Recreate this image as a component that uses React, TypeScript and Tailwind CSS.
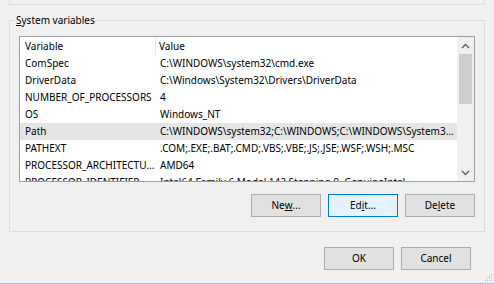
import React from 'react';

const rows: { name: string; value: string; selected?: boolean }[] = [
  { name: 'ComSpec', value: 'C:\\WINDOWS\\system32\\cmd.exe' },
  { name: 'DriverData', value: 'C:\\Windows\\System32\\Drivers\\DriverData' },
  { name: 'NUMBER_OF_PROCESSORS', value: '4' },
  { name: 'OS', value: 'Windows_NT' },
  {
    name: 'Path',
    value: 'C:\\WINDOWS\\system32;C:\\WINDOWS;C:\\WINDOWS\\System32\\Wbem;C:\\WINDOWS\\System32\\WindowsPowerShell\\v1.0\\',
    selected: true,
  },
  { name: 'PATHEXT', value: '.COM;.EXE;.BAT;.CMD;.VBS;.VBE;.JS;.JSE;.WSF;.WSH;.MSC' },
  { name: 'PROCESSOR_ARCHITECTURE', value: 'AMD64' },
  { name: 'PROCESSOR_IDENTIFIER', value: 'Intel64 Family 6 Model 142 Stepping 9, GenuineIntel' },
];

const Chevron = ({ up }: { up?: boolean }) => (
  <svg width="9" height="6" viewBox="0 0 9 6">
    <path
      d={up ? 'M1 5 L4.5 1.5 L8 5' : 'M1 1 L4.5 4.5 L8 1'}
      fill="none"
      stroke="#606060"
      strokeWidth="1.4"
    />
  </svg>
);

const Button = ({ children, focused }: { children: React.ReactNode; focused?: boolean }) => (
  <div
    className={
      focused
        ? 'w-[70px] h-[23px] flex items-center justify-center border border-[#0078d7] bg-[#e5f1fb]'
        : 'w-[70px] h-[23px] flex items-center justify-center border border-[#adadad] bg-[#e1e1e1]'
    }
  >
    {children}
  </div>
);

export default function App() {
  return (
    <div
      className="relative w-[494px] h-[284px] bg-[#f0f0f0] overflow-hidden flex flex-col text-[10px] text-black"
      style={{ fontFamily: '"Noto Sans", sans-serif' }}
    >
      {/* upper group box, mostly scrolled out */}
      <div className="mx-[9px] h-[5px] border-x border-b border-[#dcdcdc]" />

      {/* System variables group */}
      <div className="relative mt-[15px] mx-[9px] h-[212px] border border-[#dcdcdc] px-[9px] pt-[15px] flex flex-col">
        <span className="absolute left-[5px] top-[-8px] px-[1px] bg-[#f0f0f0] leading-[14px]">
          <span className="underline">S</span>ystem variables
        </span>

        <div className="h-[146px] border border-[#a0a0a0] bg-white flex overflow-hidden">
          <div className="flex-1 min-w-0 flex flex-col">
            <div className="h-[18px] flex items-center shrink-0">
              <div className="w-[136px] h-[17px] pl-[5px] flex items-center border-r border-[#e5e5e5]">Variable</div>
              <div className="pl-[3px]">Value</div>
            </div>
            {rows.map((r) => (
              <div
                key={r.name}
                className={
                  r.selected
                    ? 'h-[17px] shrink-0 flex items-center bg-[#e5e5e5]'
                    : 'h-[17px] shrink-0 flex items-center'
                }
              >
                <div className="w-[136px] pl-[5px] truncate">{r.name}</div>
                <div className="flex-1 min-w-0 pl-[4px] pr-[2px] truncate">{r.value}</div>
              </div>
            ))}
          </div>

          {/* vertical scrollbar */}
          <div className="w-[17px] bg-[#f0f0f0] flex flex-col shrink-0">
            <div className="h-[17px] flex items-center justify-center">
              <Chevron up />
            </div>
            <div className="h-[50px] mx-[2px] bg-[#cdcdcd]" />
            <div className="flex-1" />
            <div className="h-[17px] flex items-center justify-center">
              <Chevron />
            </div>
          </div>
        </div>

        <div className="mt-[12px] flex justify-end gap-[7px]">
          <Button>
            Ne<span className="underline">w</span>...
          </Button>
          <Button focused>
            Ed<span className="underline">i</span>t...
          </Button>
          <Button>
            De<span className="underline">l</span>ete
          </Button>
        </div>
      </div>

      <div className="mt-[15px] mr-[23px] flex justify-end gap-[7px]">
        <Button>OK</Button>
        <Button>Cancel</Button>
      </div>

      {/* size grip */}
      <svg className="absolute right-[1px] bottom-[2px]" width="8" height="8" viewBox="0 0 8 8">
        <rect x="6" y="0" width="1" height="1" fill="#b8b8b8" />
        <rect x="4" y="2" width="1" height="1" fill="#b8b8b8" />
        <rect x="6" y="2" width="1" height="1" fill="#b8b8b8" />
        <rect x="2" y="4" width="1" height="1" fill="#b8b8b8" />
        <rect x="4" y="4" width="1" height="1" fill="#b8b8b8" />
        <rect x="6" y="4" width="1" height="1" fill="#b8b8b8" />
        <rect x="0" y="6" width="1" height="1" fill="#b8b8b8" />
        <rect x="2" y="6" width="1" height="1" fill="#b8b8b8" />
        <rect x="4" y="6" width="1" height="1" fill="#b8b8b8" />
        <rect x="6" y="6" width="1" height="1" fill="#b8b8b8" />
      </svg>

      {/* window frame bottom edge */}
      <div className="absolute left-0 right-0 bottom-0 h-[1px] bg-[#9cc4e4]" />
    </div>
  );
}
